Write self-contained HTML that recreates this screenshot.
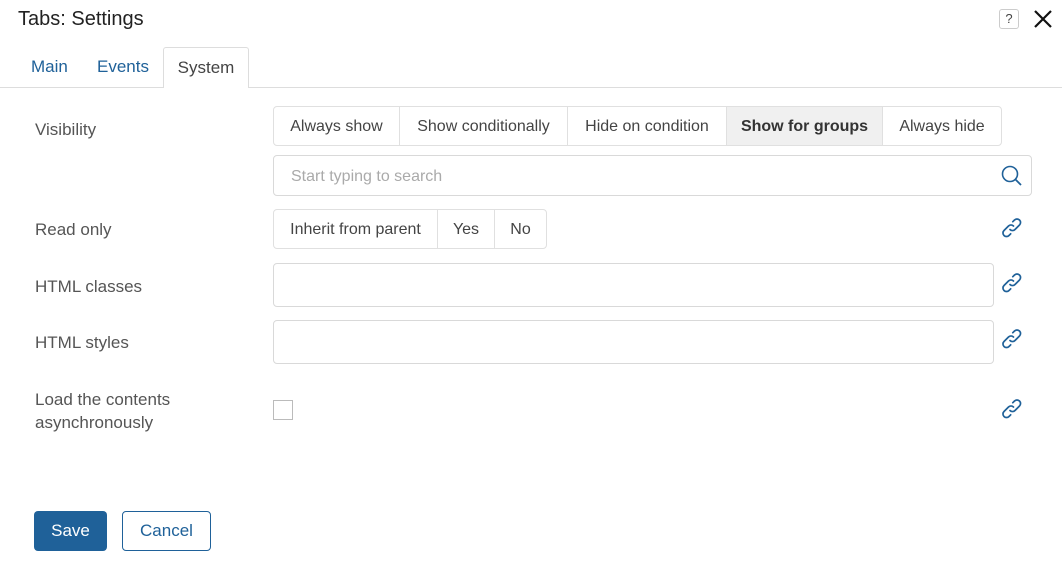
<!DOCTYPE html>
<html><head><style>
*{box-sizing:border-box;margin:0;padding:0}
body{width:1062px;height:562px;background:#fff;font-family:"Liberation Sans",sans-serif;color:#333;position:relative;overflow:hidden}
.a{position:absolute}
.lbl{position:absolute;left:35px;font-size:17px;color:#555;line-height:23px}
.grp{position:absolute;display:flex;height:40px}
.grp div{border:1px solid #e0e0e0;margin-left:-1px;font-size:16px;color:#444;display:flex;align-items:center;justify-content:center;padding-top:1px}
.grp div:first-child{border-radius:4px 0 0 4px;margin-left:0}
.grp div:last-child{border-radius:0 4px 4px 0}
.inp{position:absolute;border:1px solid #d9d9d9;border-radius:4px}
.link{position:absolute;width:24px;height:24px}
</style></head><body>
<div class="a" style="left:18px;top:8px;font-size:20px;color:#222">Tabs: Settings</div>
<div class="a" style="left:999px;top:9px;width:20px;height:20px;border:1px solid #ccc;border-radius:3px;font-size:13px;text-align:center;line-height:18px;color:#444">?</div>
<svg class="a" style="left:1033px;top:9px" width="20" height="20"><path d="M2 2L18 18M18 2L2 18" stroke="#111" stroke-width="2.2"/></svg>
<div class="a" style="left:0;top:87px;width:1062px;height:1px;background:#ddd"></div>
<div class="a" style="left:31px;top:57px;font-size:17px;color:#1f6199">Main</div>
<div class="a" style="left:97px;top:57px;font-size:17px;color:#1f6199">Events</div>
<div class="a" style="left:163px;top:47px;width:86px;height:41px;border:1px solid #ddd;border-bottom:none;border-radius:3px 3px 0 0;background:#fff;font-size:17px;color:#444;text-align:center;padding-top:10px">System</div>

<div class="lbl" style="top:118px">Visibility</div>
<div class="grp" style="left:273px;top:106px">
<div style="width:127px">Always show</div><div style="width:169px">Show conditionally</div><div style="width:160px">Hide on condition</div><div style="width:157px;background:#f0f0f0;font-weight:bold;color:#333">Show for groups</div><div style="width:120px">Always hide</div></div>
<div class="inp" style="left:273px;top:155px;width:759px;height:41px"><span class="a" style="left:17px;top:12px;font-size:16px;color:#aaa">Start typing to search</span>
<svg class="a" style="left:726px;top:8px" width="24" height="24"><circle cx="10" cy="10" r="7.5" fill="none" stroke="#1f6199" stroke-width="1.6"/><path d="M15.5 15.5L21 21" stroke="#1f6199" stroke-width="1.8"/></svg></div>

<div class="lbl" style="top:218px">Read only</div>
<div class="grp" style="left:273px;top:209px">
<div style="width:165px">Inherit from parent</div><div style="width:58px">Yes</div><div style="width:53px">No</div></div>

<div class="lbl" style="top:275px">HTML classes</div>
<div class="inp" style="left:273px;top:263px;width:721px;height:44px"></div>
<div class="lbl" style="top:331px">HTML styles</div>
<div class="inp" style="left:273px;top:320px;width:721px;height:44px"></div>
<div class="lbl" style="top:388px">Load the contents<br>asynchronously</div>
<div class="a" style="left:273px;top:400px;width:20px;height:20px;border:1px solid #bbb"></div>

<svg width="0" height="0" style="position:absolute"><defs><g id="lk" fill="none" stroke="#1f6199" stroke-width="1.7" stroke-linecap="round"><path d="M10 13.5a3.5 3.5 0 0 0 5 0l4.5-4.5a3.5 3.5 0 0 0-5-5l-1.7 1.7"/><path d="M13.5 10a3.5 3.5 0 0 0-5 0l-4.5 4.5a3.5 3.5 0 0 0 5 5l1.7-1.7"/></g></defs></svg>
<svg class="link" style="left:1000px;top:216px"><use href="#lk"/></svg>
<svg class="link" style="left:1000px;top:271px"><use href="#lk"/></svg>
<svg class="link" style="left:1000px;top:327px"><use href="#lk"/></svg>
<svg class="link" style="left:1000px;top:397px"><use href="#lk"/></svg>

<div class="a" style="left:34px;top:511px;width:73px;height:40px;background:#1f6199;border-radius:4px;color:#fff;font-size:17px;text-align:center;line-height:40px">Save</div>
<div class="a" style="left:122px;top:511px;width:89px;height:40px;border:1px solid #1f6199;border-radius:4px;color:#1f6199;font-size:17px;text-align:center;line-height:38px">Cancel</div>
</body></html>
